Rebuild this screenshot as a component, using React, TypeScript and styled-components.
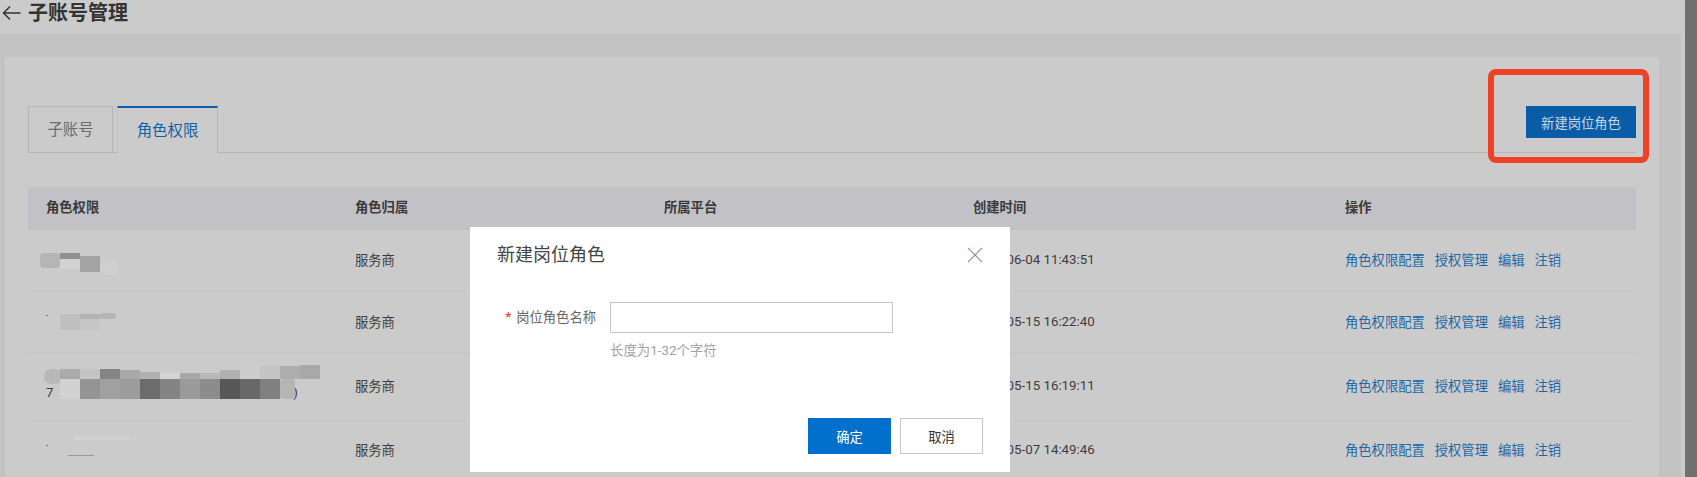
import React from 'react'
import styled, { createGlobalStyle } from 'styled-components'

const FONT = `Roboto, 'Noto Sans CJK SC', sans-serif`

const GlobalStyle = createGlobalStyle`
  html, body {
    margin: 0;
    padding: 0;
    background: #c3c3c3;
  }
  * {
    box-sizing: border-box;
  }
`

const Page = styled.div`
  position: relative;
  display: flex;
  width: 1697px;
  height: 477px;
  overflow: hidden;
  font-family: ${FONT};
  font-size: 13.3px;
  color: #3d3d3d;
`

const Main = styled.div`
  width: 1681px;
  background: #c3c3c3;
`

const ScrollGutter = styled.div`
  width: 4px;
  background: #cbcbcb;
`

const ScrollTrack = styled.div`
  flex: 1;
  background: #707070;
`

const TopBar = styled.header`
  display: flex;
  align-items: center;
  gap: 7px;
  height: 34px;
  padding: 0 0 8px 2px;
  background: #cbcbcb;
`

const PageTitle = styled.h1`
  margin: 0;
  font-size: 20px;
  line-height: 24px;
  font-weight: 700;
  color: #333333;
`

const Card = styled.section`
  width: 1654px;
  height: 420px;
  margin: 23px 0 0 5px;
  padding: 49px 23px 0;
  background: #cbcbcb;
`

const TabBar = styled.div`
  display: flex;
  justify-content: space-between;
  align-items: flex-start;
  height: 47px;
  border-bottom: 1px solid #b5b5b5;
`

const Tabs = styled.div`
  display: flex;
  gap: 4px;
`

const Tab = styled.div<{ $active?: boolean }>`
  display: flex;
  align-items: center;
  justify-content: center;
  height: 47px;
  padding-bottom: 3px;
  width: ${({ $active }) => ($active ? '101px' : '85px')};
  font-size: 15.4px;
  background: #cbcbcb;
  color: ${({ $active }) => ($active ? '#0f62a8' : '#6b6b6b')};
  border: 1px solid #b5b5b5;
  border-top: ${({ $active }) => ($active ? '2px solid #0a5ca6' : '1px solid #b5b5b5')};
  border-left-color: ${({ $active }) => ($active ? '#c2c2c2' : '#b5b5b5')};
  border-bottom-color: ${({ $active }) => ($active ? '#cbcbcb' : '#b5b5b5')};
`

const PrimaryButton = styled.button`
  width: 110px;
  height: 32px;
  border: 0;
  padding: 0;
  background: #0a5ca6;
  color: #c9d6e2;
  font-family: ${FONT};
  font-size: 13.3px;
`

const Table = styled.div`
  margin-top: 34px;
`

const HeadRow = styled.div`
  display: grid;
  grid-template-columns: 309px 309px 309px 372px 309px;
  align-items: center;
  height: 43px;
  padding-bottom: 3px;
  background: #c2c1c6;
  border-bottom: 1px solid #bdbdbd;
  font-weight: 700;
  color: #3a3a3a;
`

const Row = styled.div<{ $height: number }>`
  display: grid;
  grid-template-columns: 309px 309px 309px 372px 309px;
  align-items: center;
  height: ${({ $height }) => $height}px;
  padding-bottom: 2px;
  border-bottom: 1px solid #c4c4c7;
`

const Cell = styled.div`
  position: relative;
  padding-left: 18px;
  white-space: nowrap;
`

const NameCell = styled(Cell)`
  align-self: stretch;
`

const HiddenName = styled.div`
  display: flex;
  justify-content: space-between;
  width: 252px;
  padding-top: 32px;
  line-height: 16px;
`

const Mosaic = styled.svg`
  position: absolute;
  left: 0;
  top: 0;
  width: 309px;
  height: 68px;
`

const Actions = styled.div`
  display: flex;
  gap: 10px;
`

const ActionLink = styled.a`
  color: #1b69a8;
`

const Annotation = styled.div`
  position: absolute;
  left: 1488px;
  top: 69px;
  width: 161px;
  height: 94px;
  border: 6px solid #ee4126;
  border-radius: 8px;
`

const Modal = styled.div`
  position: absolute;
  left: 470px;
  top: 227px;
  display: flex;
  flex-direction: column;
  width: 540px;
  height: 245px;
  padding: 14px 27px 18px 27px;
  background: #ffffff;
`

const ModalHeader = styled.div`
  display: flex;
  justify-content: space-between;
  align-items: center;
  height: 28px;
`

const ModalTitle = styled.h2`
  margin: 0;
  font-size: 18px;
  line-height: 28px;
  font-weight: 400;
  color: #444444;
`

const CloseButton = styled.button`
  display: flex;
  width: 16px;
  height: 16px;
  border: 0;
  padding: 0;
  background: none;
`

const FormRow = styled.div`
  display: flex;
  margin-top: 33px;
`

const FieldLabel = styled.label`
  display: flex;
  justify-content: flex-end;
  align-items: center;
  gap: 5px;
  width: 99px;
  height: 31px;
  padding-bottom: 3px;
  color: #666666;
`

const RequiredMark = styled.span`
  color: #f0492e;
  font-weight: 700;
`

const FieldColumn = styled.div`
  margin-left: 14px;
`

const TextInput = styled.input`
  display: block;
  width: 283px;
  height: 31px;
  border: 1px solid #c4c6cf;
  background: #ffffff;
  outline: none;
`

const Hint = styled.div`
  margin-top: 10px;
  line-height: 16px;
  font-size: 13.4px;
  color: #a3a3a3;
`

const ModalFooter = styled.div`
  display: flex;
  justify-content: flex-end;
  gap: 9px;
  margin-top: auto;
`

const FooterButton = styled.button<{ $primary?: boolean }>`
  width: 83px;
  height: 36px;
  padding: 0;
  font-family: ${FONT};
  font-size: 13.3px;
  background: ${({ $primary }) => ($primary ? '#0070cc' : '#ffffff')};
  color: ${({ $primary }) => ($primary ? '#ffffff' : '#333333')};
  border: ${({ $primary }) => ($primary ? '0' : '1px solid #c4c6cf')};
`

type Tile = [number, number, number, number, string, number?]

// x/y are relative to the top left of the name cell
const MOSAIC_ROW_1: Tile[] = [
  [12, 23, 20, 15, '#b5b5b5', 4],
  [32, 23, 20, 6, '#909090'],
  [32, 29, 20, 10, '#d2d2d2'],
  [52, 26, 20, 16, '#a3a3a3'],
  [72, 29, 18, 16, '#cfcfcf', 7],
]

const MOSAIC_ROW_2: Tile[] = [
  [32, 22, 20, 16, '#c0c0c0'],
  [52, 22, 20, 5, '#b2b2b2'],
  [52, 27, 20, 11, '#c6c6c6'],
  [72, 21, 16, 6, '#b5b5b5', 3],
  [18, 23, 2, 1, '#777777'],
]

const MOSAIC_ROW_3: Tile[] = [
  [16, 16, 18, 15, '#b8b8b8', 7],
  [32, 16, 20, 10, '#aaaaaa'],
  [52, 16, 20, 10, '#c4c4c4'],
  [72, 16, 20, 10, '#858585'],
  [92, 17, 20, 9, '#a8a8a8'],
  [112, 19, 20, 7, '#b0b0b0'],
  [132, 20, 20, 6, '#d4d4d4'],
  [152, 20, 20, 6, '#a8a8a8'],
  [172, 20, 20, 6, '#b8b8b8'],
  [192, 17, 20, 9, '#b0b0b0'],
  [212, 13, 20, 13, '#cdcdcd'],
  [232, 13, 20, 13, '#c4c4c4'],
  [252, 13, 20, 13, '#aeaeae'],
  [272, 12, 20, 14, '#a8a8a8', 1],
  [32, 26, 20, 20, '#d2d2d2'],
  [52, 26, 20, 20, '#949494'],
  [72, 26, 20, 20, '#a0a0a0'],
  [92, 26, 20, 20, '#9c9c9c'],
  [112, 26, 20, 20, '#6c6c6c'],
  [132, 26, 20, 20, '#848484'],
  [152, 26, 20, 20, '#9a9a9a'],
  [172, 26, 20, 20, '#8c8c8c'],
  [192, 26, 20, 20, '#585858'],
  [212, 26, 20, 20, '#686868'],
  [232, 26, 20, 20, '#808080'],
  [252, 26, 15, 20, '#b5b5b5', 3],
]

const MOSAIC_ROW_4: Tile[] = [
  [46, 15, 56, 4, '#d1d1d1', 2],
  [40, 34, 26, 1, '#9a9a9a'],
  [18, 24, 2, 1, '#777777'],
]

const MosaicPatch: React.FC<{ tiles: Tile[] }> = ({ tiles }) => (
  <Mosaic viewBox="0 0 309 68" aria-hidden="true">
    {tiles.map(([x, y, w, h, fill, r]) => (
      <rect key={`${x}-${y}`} x={x} y={y} width={w} height={h} rx={r} fill={fill} />
    ))}
  </Mosaic>
)

const BackArrow = () => (
  <svg width="19" height="16" viewBox="0 0 19 16" fill="none" stroke="#333333" strokeWidth="1.5">
    <path d="M18.5 8H1.5M8 1.5L1.5 8L8 14.5" />
  </svg>
)

const CloseIcon = () => (
  <svg width="16" height="16" viewBox="0 0 16 16" fill="none" stroke="#9a9a9a" strokeWidth="1.2">
    <path d="M1 1L15 15M15 1L1 15" />
  </svg>
)

const ROWS = [
  { height: 62, time: '2024-06-04 11:43:51', tiles: MOSAIC_ROW_1 },
  { height: 61, time: '2024-05-15 16:22:40', tiles: MOSAIC_ROW_2 },
  { height: 68, time: '2024-05-15 16:19:11', tiles: MOSAIC_ROW_3, hiddenName: true },
  { height: 60, time: '2024-05-07 14:49:46', tiles: MOSAIC_ROW_4 },
]

const ACTIONS = ['角色权限配置', '授权管理', '编辑', '注销']

export default function App() {
  return (
    <Page>
      <GlobalStyle />
      <Main>
        <TopBar>
          <BackArrow />
          <PageTitle>子账号管理</PageTitle>
        </TopBar>
        <Card>
          <TabBar>
            <Tabs>
              <Tab>子账号</Tab>
              <Tab $active>角色权限</Tab>
            </Tabs>
            <PrimaryButton>新建岗位角色</PrimaryButton>
          </TabBar>
          <Table>
            <HeadRow>
              <Cell>角色权限</Cell>
              <Cell>角色归属</Cell>
              <Cell>所属平台</Cell>
              <Cell>创建时间</Cell>
              <Cell>操作</Cell>
            </HeadRow>
            {ROWS.map((row) => (
              <Row key={row.time} $height={row.height}>
                <NameCell>
                  {row.hiddenName && (
                    <HiddenName>
                      <span>7</span>
                      <span>)</span>
                    </HiddenName>
                  )}
                  <MosaicPatch tiles={row.tiles} />
                </NameCell>
                <Cell>服务商</Cell>
                <Cell />
                <Cell>{row.time}</Cell>
                <Cell>
                  <Actions>
                    {ACTIONS.map((action) => (
                      <ActionLink key={action}>{action}</ActionLink>
                    ))}
                  </Actions>
                </Cell>
              </Row>
            ))}
          </Table>
        </Card>
      </Main>
      <ScrollGutter />
      <ScrollTrack />
      <Annotation />
      <Modal>
        <ModalHeader>
          <ModalTitle>新建岗位角色</ModalTitle>
          <CloseButton>
            <CloseIcon />
          </CloseButton>
        </ModalHeader>
        <FormRow>
          <FieldLabel>
            <RequiredMark>*</RequiredMark>
            岗位角色名称
          </FieldLabel>
          <FieldColumn>
            <TextInput />
            <Hint>长度为1-32个字符</Hint>
          </FieldColumn>
        </FormRow>
        <ModalFooter>
          <FooterButton $primary>确定</FooterButton>
          <FooterButton>取消</FooterButton>
        </ModalFooter>
      </Modal>
    </Page>
  )
}
